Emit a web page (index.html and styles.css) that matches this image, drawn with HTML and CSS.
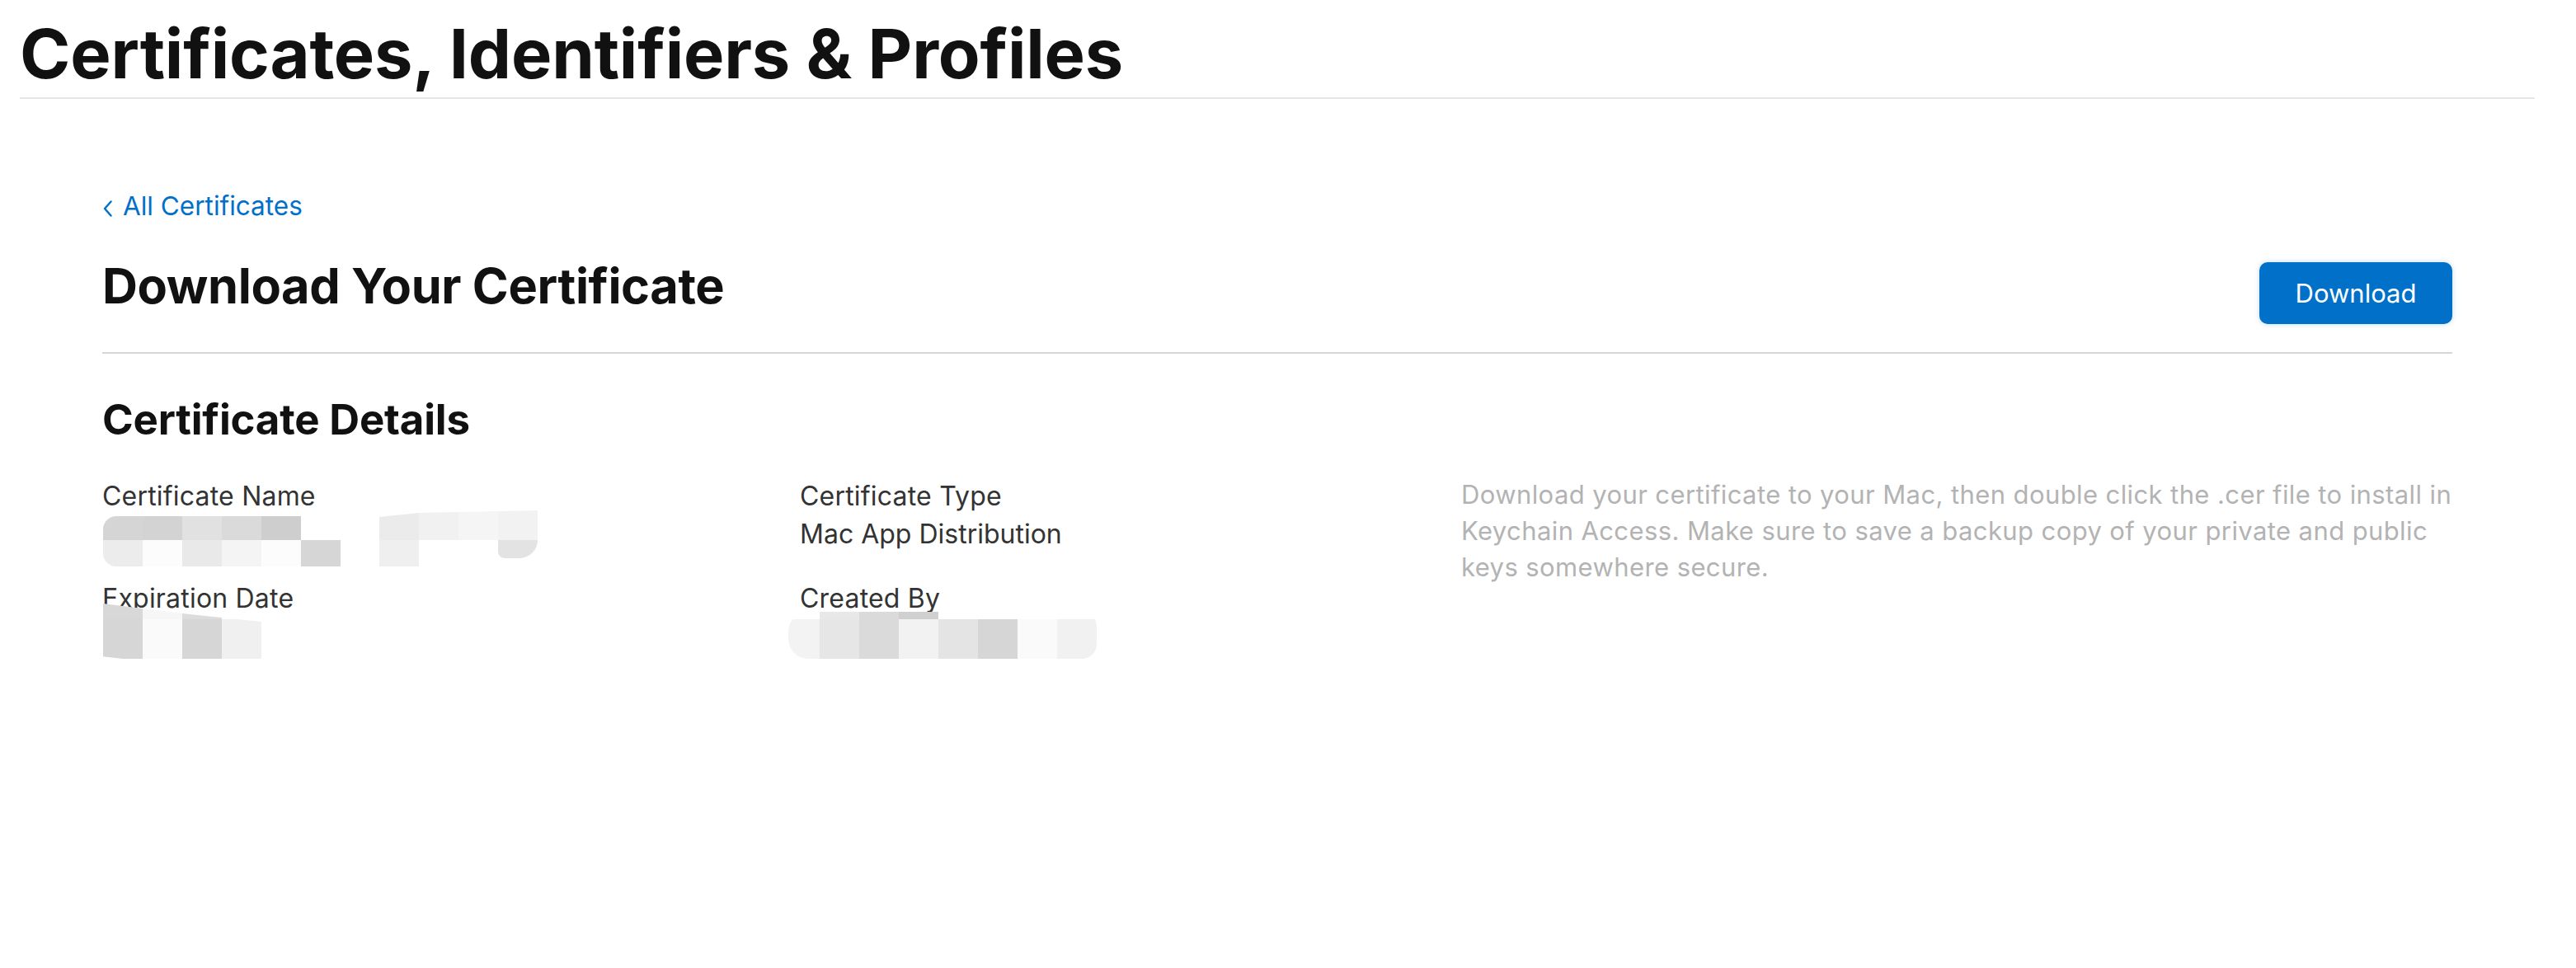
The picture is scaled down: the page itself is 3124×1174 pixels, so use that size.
FILE: index.html
```html
<!DOCTYPE html>
<html lang="en">
<head>
<meta charset="utf-8">
<title>Certificates, Identifiers &amp; Profiles</title>
<link rel="stylesheet" href="styles.css">
</head>
<body>
<header class="page-header">
  <h1 class="page-title">Certificates, Identifiers &amp; Profiles</h1>
</header>
<main class="content">
  <a class="back-link" href="#"><svg class="chev" width="11" height="20" viewBox="0 0 11 20"><path d="M9.5 1.5 L2 10 L9.5 18.5" fill="none" stroke="#0070c9" stroke-width="2.4" stroke-linecap="round" stroke-linejoin="round"/></svg><span>All Certificates</span></a>
  <div class="title-row">
    <h2 class="section-title">Download Your Certificate</h2>
    <button class="btn-download" type="button">Download</button>
  </div>
  <h3 class="details-title">Certificate Details</h3>
  <div class="details">
    <div class="col">
      <div class="field">
        <div class="label">Certificate Name</div>
        <div class="value redacted">
          <div class="mosaic m-name-a">
            <i style="background:#d5d5d5"></i><i style="background:#d3d3d3"></i><i style="background:#e1e1e1"></i><i style="background:#dadada"></i><i style="background:#cecece"></i><i style="background:transparent"></i>
            <i style="background:#ececec"></i><i style="background:#fcfcfc"></i><i style="background:#e9e9e9"></i><i style="background:#f4f4f4"></i><i style="background:#fcfcfc"></i><i style="background:#d6d6d6"></i>
          </div>
          <div class="mosaic m-name-b">
            <i style="background:#ebebeb"></i><i style="background:#f1f1f1"></i><i style="background:#f5f5f5"></i><i style="background:#f2f2f2"></i>
            <i style="background:#efefef"></i><i style="background:transparent"></i><i style="background:transparent"></i><i class="tail" style="background:#e3e3e3"></i>
          </div>
        </div>
      </div>
      <div class="field">
        <div class="label">Expiration Date</div>
        <div class="value redacted">
          <div class="mosaic m-date">
            <i style="background:#d8d8d8"></i><i style="background:#f6f6f6"></i><i style="background:#dcdcdc"></i><i style="background:transparent"></i>
            <i style="background:#d6d6d6"></i><i style="background:#fafafa"></i><i style="background:#d6d6d6"></i><i style="background:#f0f0f0"></i>
          </div>
        </div>
      </div>
    </div>
    <div class="col">
      <div class="field">
        <div class="label">Certificate Type</div>
        <div class="value">Mac App Distribution</div>
      </div>
      <div class="field">
        <div class="label">Created By</div>
        <div class="value redacted">
          <div class="mosaic m-creator">
            <i style="background:transparent"></i><i style="background:#e8e8e8"></i><i style="background:#dadada"></i><i style="background:#d0d0d0"></i><i style="background:transparent"></i><i style="background:transparent"></i><i style="background:transparent"></i><i style="background:transparent"></i>
            <i style="background:#f3f3f3"></i><i style="background:#e6e6e6"></i><i style="background:#dadada"></i><i style="background:#f2f2f2"></i><i style="background:#e4e4e4"></i><i style="background:#d6d6d6"></i><i style="background:#fafafa"></i><i style="background:#f1f1f1"></i>
          </div>
        </div>
      </div>
    </div>
    <p class="note">Download your certificate to your Mac, then double click the .cer file to install in Keychain Access. Make sure to save a backup copy of your private and public keys somewhere secure.</p>
  </div>
</main>
</body>
</html>
```

FILE: styles.css
```css
* { box-sizing: border-box; }

html, body {
  margin: 0;
  padding: 0;
  background: #ffffff;
}

body {
  font-family: "Inter", "Liberation Sans", sans-serif;
  color: #333333;
}

.page-header {
  margin: 0 50px 0 24px;
  padding: 14px 0 2px 0;
  border-bottom: 2px solid #e6e6e6;
}

.page-title {
  margin: 0;
  font-size: 83px;
  line-height: 102px;
  font-weight: 700;
  color: #111111;
  letter-spacing: -0.2px;
}

.content {
  margin: 0 0 0 124px;
  width: 2850px;
  padding-top: 108px;
}

.back-link {
  display: inline-flex;
  align-items: center;
  height: 44px;
  font-size: 31.5px;
  line-height: 44px;
  color: #0070c9;
  text-decoration: none;
}

.back-link .chev {
  margin: 6px 13px 0 1px;
}

.title-row {
  display: flex;
  justify-content: space-between;
  align-items: flex-start;
  margin-top: 39px;
  padding-bottom: 34px;
  border-bottom: 2px solid #d6d6d6;
}

.section-title {
  margin: 0;
  font-size: 59.5px;
  line-height: 70px;
  font-weight: 700;
  color: #111111;
  letter-spacing: -0.4px;
}

.btn-download {
  margin-top: 7px;
  width: 234px;
  height: 75px;
  border: 0;
  border-radius: 10px;
  background: #0070c9;
  color: #ffffff;
  font-family: "Inter", "Liberation Sans", sans-serif;
  font-size: 31px;
  box-shadow: 0 0 6px rgba(0, 112, 201, 0.25);
  padding: 0;
}

.details-title {
  margin: 50px 0 0 0;
  font-size: 51px;
  line-height: 60px;
  font-weight: 700;
  color: #111111;
  letter-spacing: -0.2px;
}

.details {
  display: grid;
  grid-template-columns: 846px 802px 1fr;
  margin-top: 40px;
}

.field {
  margin-bottom: 32px;
}

.label, .value {
  font-size: 32px;
  line-height: 46px;
  color: #333333;
}

.label {
  letter-spacing: 0.2px;
}

.value.redacted {
  position: relative;
  height: 46px;
}

.mosaic {
  position: absolute;
  display: grid;
}

.mosaic i {
  display: block;
}

.m-name-a {
  left: 1px;
  top: 1px;
  grid-template-columns: repeat(6, 48px);
  grid-template-rows: 29px 32px;
  border-radius: 16px 0 0 16px;
  overflow: hidden;
}

.m-name-b {
  left: 336px;
  top: -6px;
  grid-template-columns: repeat(4, 48px);
  grid-template-rows: 36px 32px;
  clip-path: polygon(0 8px, 48px 3px, 100% 0, 100% 100%, 0 100%);
  border-radius: 0 24px 0 0;
}

.m-name-b .tail {
  height: 22px;
  border-radius: 0 0 22px 8px;
}

.m-date {
  left: 1px;
  top: -17px;
  grid-template-columns: repeat(4, 48px);
  grid-template-rows: 19px 48px;
  clip-path: polygon(0 0, 96px 12px, 192px 22px, 192px 100%, 24px 100%, 0 96%);
}

.m-creator {
  left: -14px;
  top: -7px;
  grid-template-columns: 38px repeat(7, 48px);
  grid-template-rows: 9px 48px;
  border-radius: 24px 18px 18px 24px;
  overflow: hidden;
}

.note {
  margin: -1px 0 0 0;
  font-size: 31px;
  line-height: 44px;
  letter-spacing: 0.4px;
  color: #b3b3b3;
}
```
